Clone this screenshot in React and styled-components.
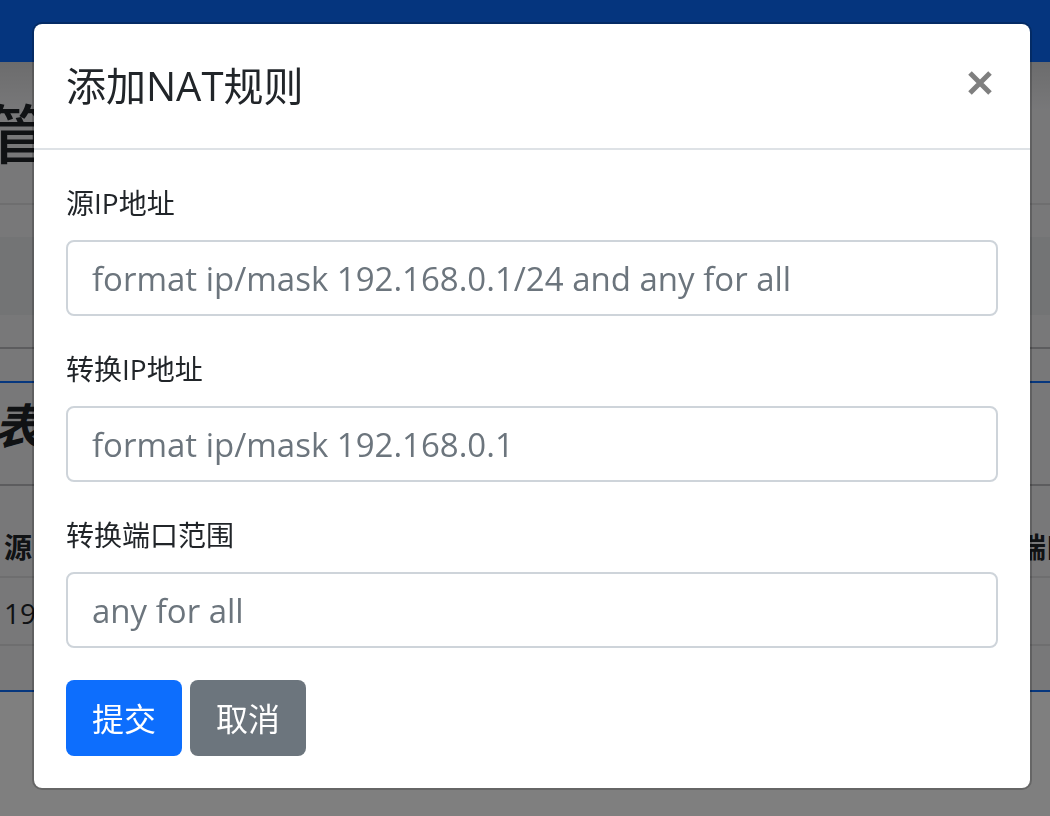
import React from 'react';
import styled, { createGlobalStyle } from 'styled-components';

const GlobalStyle = createGlobalStyle`
  *, *::before, *::after { box-sizing: border-box; }
  body {
    margin: 0;
    background: #fff;
    color: #212529;
    font-family: "Open Sans", "Noto Sans CJK SC", sans-serif;
    font-size: 32px;
    overflow: hidden;
  }
`;

const Page = styled.div`
  overflow: hidden;
`;

const NavBar = styled.nav`
  height: 62px;
  background: #0a6bfd;
`;

const Main = styled.main`
  background: linear-gradient(#d8d8da, #f0f0f3 48px);
`;

const PageHeading = styled.h1`
  margin: 0 0 0 -12px;
  height: 143px;
  border-bottom: 2px solid #dcdcde;
  font-size: 64px;
  font-weight: 500;
  line-height: 144px;
`;

const Toolbar = styled.div`
  height: 78px;
  margin: 32px 0;
  background: #e6e9eb;
`;

const Panel = styled.section`
  border-top: 2px solid #b8b8bc;
`;

const TableCard = styled.div`
  margin-top: 32px;
  height: 311px;
  overflow: hidden;
  border: solid #0d6efd;
  border-width: 2px 0;
`;

const CardTitle = styled.h2`
  margin: 0;
  height: 103px;
  border-bottom: 2px solid #b8b8bc;
  font-size: 48px;
  font-style: italic;
  font-weight: 700;
  line-height: 86px;
  text-indent: -6px;
`;

const RuleTable = styled.table`
  width: calc(100% + 40px);
  border-collapse: collapse;
  table-layout: fixed;
  font-size: 28px;
  line-height: 42px;

  th, td {
    padding: 14px 4px 10px;
    text-align: left;
    border-bottom: 2px solid #dcdcde;
  }
  th { padding-top: 40px; padding-bottom: 8px; }
  th:last-child { width: 76px; white-space: nowrap; }
`;

const Backdrop = styled.div`
  position: fixed;
  inset: 0;
  padding: 22px 18px 22px 32px;
  background: rgba(0, 0, 0, 0.5);
  overflow: hidden;
`;

const Dialog = styled.div`
  background: #fff;
  background-clip: padding-box;
  border: 2px solid rgba(0, 0, 0, 0.2);
  border-radius: 10px;
`;

const DialogHeader = styled.header`
  display: flex;
  align-items: flex-start;
  justify-content: space-between;
  padding: 32px;
  border-bottom: 2px solid #dee2e6;
`;

const DialogTitle = styled.h5`
  margin: 0;
  font-size: 40px;
  font-weight: 400;
  line-height: 60px;
`;

const CloseButton = styled.button`
  display: flex;
  padding: 15px 6px;
  border: 0;
  background: none;
  color: #7f7f7f;
`;

const DialogForm = styled.form`
  padding: 32px;
`;

const Field = styled.div`
  margin-bottom: 32px;
`;

const Label = styled.label`
  display: block;
  margin-bottom: 16px;
  font-size: 28px;
  line-height: 42px;
`;

const TextInput = styled.input`
  display: block;
  width: 100%;
  height: 76px;
  padding: 12px 24px;
  border: 2px solid #ced4da;
  border-radius: 8px;
  background: #fff;
  color: #212529;
  font-family: inherit;
  font-size: 33px;

  &::placeholder { color: #6c757d; opacity: 1; }
`;

const Actions = styled.div`
  display: flex;
  gap: 8px;
`;

const Button = styled.button`
  height: 76px;
  padding: 2px 26px 0;
  border: 0;
  border-radius: 8px;
  background: ${(p) => (p.$primary ? '#0d6efd' : '#6c757d')};
  color: #fff;
  font-family: inherit;
  font-size: 32px;
  line-height: 48px;
`;

const fields = [
  { id: 'source', label: '源IP地址', placeholder: 'format ip/mask 192.168.0.1/24 and any for all' },
  { id: 'target', label: '转换IP地址', placeholder: 'format ip/mask 192.168.0.1' },
  { id: 'ports', label: '转换端口范围', placeholder: 'any for all' },
];

export default function App() {
  return (
    <>
      <GlobalStyle />
      <Page>
        <NavBar />
        <Main>
          <PageHeading>管</PageHeading>
          <Toolbar />
          <Panel>
            <TableCard>
              <CardTitle>表</CardTitle>
              <RuleTable>
                <thead>
                  <tr><th>源</th><th>端口</th></tr>
                </thead>
                <tbody>
                  <tr><td>19</td><td /></tr>
                </tbody>
              </RuleTable>
            </TableCard>
          </Panel>
        </Main>
      </Page>
      <Backdrop>
        <Dialog role="dialog" aria-modal="true" aria-labelledby="dialog-title">
          <DialogHeader>
            <DialogTitle id="dialog-title">添加NAT规则</DialogTitle>
            <CloseButton type="button" aria-label="关闭">
              <svg width="24" height="24" viewBox="0 0 24 24" fill="none" stroke="currentColor" strokeWidth="5">
                <path d="M2 2L22 22M22 2L2 22" />
              </svg>
            </CloseButton>
          </DialogHeader>
          <DialogForm onSubmit={(e) => e.preventDefault()}>
            {fields.map((f) => (
              <Field key={f.id}>
                <Label htmlFor={f.id}>{f.label}</Label>
                <TextInput id={f.id} type="text" placeholder={f.placeholder} />
              </Field>
            ))}
            <Actions>
              <Button type="submit" $primary>提交</Button>
              <Button type="button">取消</Button>
            </Actions>
          </DialogForm>
        </Dialog>
      </Backdrop>
    </>
  );
}
